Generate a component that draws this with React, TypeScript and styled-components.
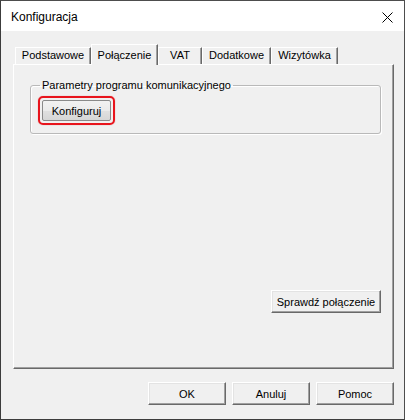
import React from "react";
import styled, { createGlobalStyle } from "styled-components";

const Global = createGlobalStyle`
  html, body { margin: 0; padding: 0; background: #ffffff; }
  * { box-sizing: border-box; }
`;

const Window = styled.div`
  width: 405px;
  height: 420px;
  border: 1px solid #4d4d4d;
  border-left-color: #3c3c3c;
  border-bottom-color: #3c3c3c;
  background: #f0f0f0;
  display: flex;
  flex-direction: column;
  font-family: "Liberation Sans", Arial, sans-serif;
  font-size: 11px;
  color: #000;
`;

const TitleBar = styled.div`
  height: 30px;
  background: #ffffff;
  display: flex;
  align-items: center;
  justify-content: space-between;
  padding: 0 10px 0 10px;
  flex: none;
`;

const Title = styled.span`
  font-family: "Segoe UI", "Liberation Sans", Arial, sans-serif;
  font-size: 12px;
  color: #000;
  margin-top: 1px;
`;

const Close = styled.svg`
  width: 11px;
  height: 11px;
  margin-right: 1px;
  margin-top: 2px;
`;

const Body = styled.div`
  flex: 1;
  display: flex;
  flex-direction: column;
  padding: 13px 10px 0 12px;
`;

const TabRow = styled.div`
  display: flex;
  align-items: flex-end;
  height: 20px;
  margin-left: 2px;
  position: relative;
  z-index: 1;
`;

const Tab = styled.div<{ $w: number; $active?: boolean }>`
  width: ${(p) => p.$w}px;
  height: ${(p) => (p.$active ? 21 : 17)}px;
  margin-bottom: ${(p) => (p.$active ? -1 : 0)}px;
  background: #f0f0f0;
  border: 1px solid;
  border-bottom: none;
  border-color: #ffffff #696969 transparent #ffffff;
  box-shadow: inset -1px 0 #a0a0a0;
  display: flex;
  align-items: flex-start;
  justify-content: center;
  padding-top: ${(p) => (p.$active ? 4 : 1)}px;
  white-space: nowrap;
`;

const Panel = styled.div`
  height: 305px;
  flex: none;
  border: 1px solid;
  border-color: #ffffff #696969 #696969 #ffffff;
  box-shadow: inset -1px -1px #a0a0a0;
  display: flex;
  flex-direction: column;
  padding: 14px 12px 0 16px;
`;

const Group = styled.fieldset`
  margin: 0;
  padding: 6px 0 11px 8px;
  border: 1px solid #b9b9b9;
  border-radius: 3px;
  box-shadow: inset 1px 1px #ffffff, 1px 1px #ffffff;
  height: 55px;
`;

const Legend = styled.legend`
  padding: 0 2px;
  margin-left: 1px;
  font-size: 11px;
`;

const Highlight = styled.div`
  display: inline-flex;
  padding: 2px;
  border: 2px solid #e8141c;
  border-radius: 5px;
  box-shadow: 0 0 1px rgba(200, 0, 0, 0.5);
  margin-left: -1px;
  margin-top: -1px;
`;

const ThemedButton = styled.button`
  width: 69px;
  height: 21px;
  font-family: "Liberation Sans", Arial, sans-serif;
  font-size: 11px;
  color: #000;
  border: 1px solid #8a8a8a;
  border-radius: 2px;
  background: linear-gradient(#f2f2f2, #ebebeb 50%, #e0e0e0 51%, #d6d6d6);
  padding: 0;
`;

const Button = styled.button<{ $w: number }>`
  width: ${(p) => p.$w}px;
  height: 23px;
  font-family: "Liberation Sans", Arial, sans-serif;
  font-size: 11px;
  color: #000;
  background: #f0f0f0;
  border: 1px solid;
  border-color: #ffffff #696969 #696969 #ffffff;
  box-shadow: inset -1px -1px #a0a0a0, inset 1px 1px #e3e3e3;
  padding: 0;
`;

const CheckRow = styled.div`
  display: flex;
  justify-content: flex-end;
  margin-top: 156px;
`;

const Footer = styled.div`
  display: flex;
  justify-content: flex-end;
  gap: 6px;
  margin-top: 13px;
  padding-right: 0px;
`;

export default function App() {
  return (
    <>
      <Global />
      <Window>
        <TitleBar>
          <Title>Konfiguracja</Title>
          <Close viewBox="0 0 11 11">
            <path d="M0.5 0.5 L10.5 10.5 M10.5 0.5 L0.5 10.5" stroke="#000" strokeWidth="1" fill="none" />
          </Close>
        </TitleBar>
        <Body>
          <TabRow>
            <Tab $w={76}>Podstawowe</Tab>
            <Tab $w={67} $active>Połączenie</Tab>
            <Tab $w={44}>VAT</Tab>
            <Tab $w={69}>Dodatkowe</Tab>
            <Tab $w={67}>Wizytówka</Tab>
          </TabRow>
          <Panel>
            <Group>
              <Legend>Parametry programu komunikacyjnego</Legend>
              <Highlight>
                <ThemedButton>Konfiguruj</ThemedButton>
              </Highlight>
            </Group>
            <CheckRow>
              <Button $w={110}>Sprawdź połączenie</Button>
            </CheckRow>
          </Panel>
          <Footer>
            <Button $w={78}>OK</Button>
            <Button $w={78}>Anuluj</Button>
            <Button $w={78}>Pomoc</Button>
          </Footer>
        </Body>
      </Window>
    </>
  );
}
